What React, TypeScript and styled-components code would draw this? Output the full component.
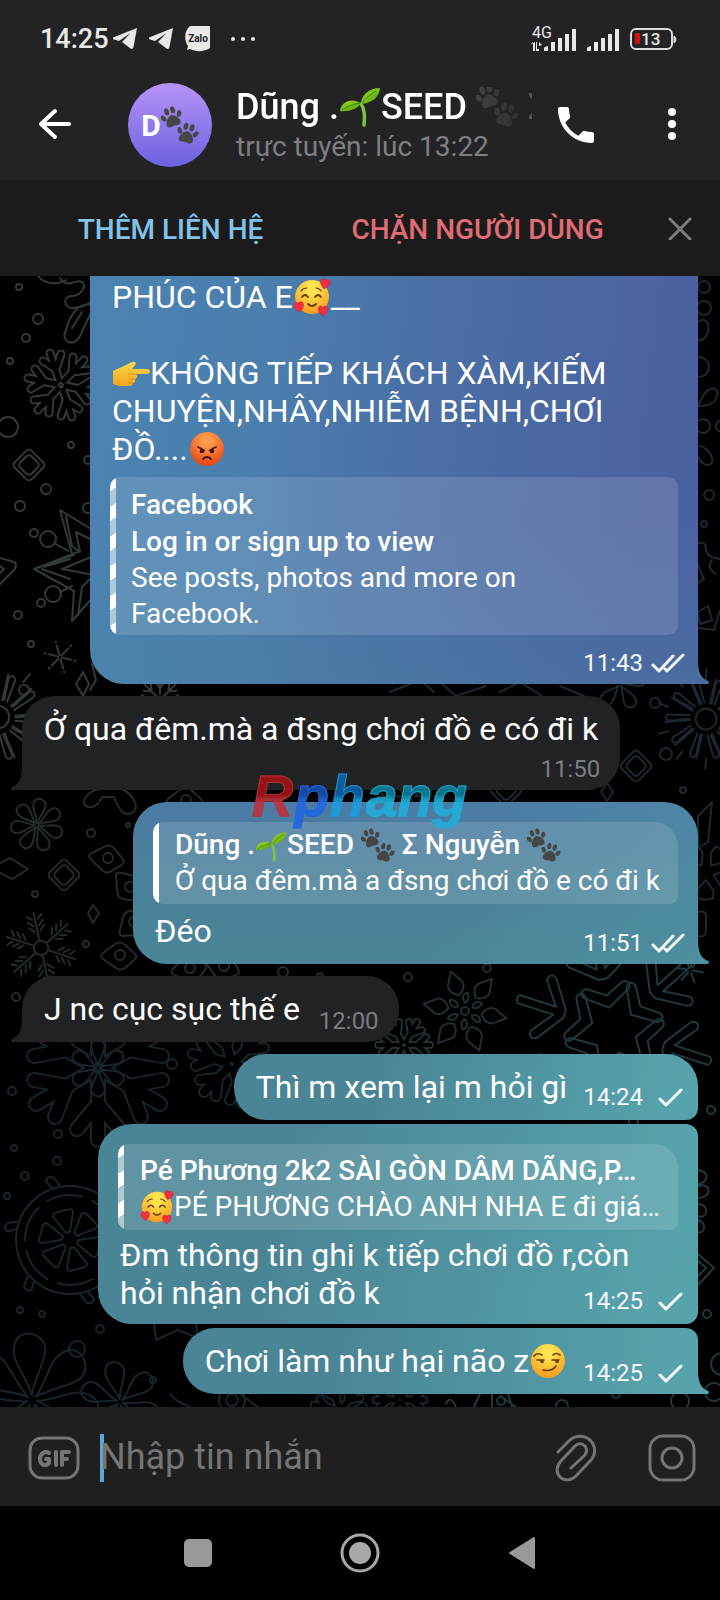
import React from "react";
import styled, { createGlobalStyle, css } from "styled-components";

const GlobalStyle = createGlobalStyle`
  *, *::before, *::after { box-sizing: border-box; }
  body { margin: 0; background: #000; }
  button, input { font: inherit; }
`;

const Screen = styled.div`
  display: flex;
  flex-direction: column;
  min-height: 100vh;
  overflow: hidden;
  background: #000;
  color: #fff;
  font-family: Roboto, "Noto Sans", "Liberation Sans", sans-serif;
`;

/* ---------- top bars ---------- */

const TopArea = styled.header`
  background: #232325;
`;

const StatusBar = styled.div`
  display: flex;
  align-items: center;
  justify-content: space-between;
  height: 70px;
  padding: 8px 42px 0 40px;
`;

const StatusGroup = styled.div`
  display: flex;
  align-items: center;
  gap: 12px;
`;

const Clock = styled.span`
  font-size: 27px;
  line-height: 32px;
  font-weight: 500;
  color: #e8e8e8;
  margin-right: -8px;
`;

const ChatHeader = styled.div`
  display: flex;
  align-items: center;
  height: 110px;
  padding: 0 24px 0 31px;
`;

const IconButton = styled.button`
  display: flex;
  flex: none;
  align-items: center;
  justify-content: center;
  width: 48px;
  height: 48px;
  padding: 0;
  border: 0;
  background: none;
  color: inherit;
`;

const Avatar = styled.div`
  display: flex;
  flex: none;
  align-items: center;
  justify-content: center;
  width: 84px;
  height: 84px;
  margin: 0 24px 0 49px;
  border-radius: 50%;
  background: linear-gradient(#b694f9, #6c61df);
  font-size: 30px;
  font-weight: 700;
`;

const Identity = styled.div`
  flex: 1;
  min-width: 0;
  margin-right: 20px;
  padding-top: 1px;
`;

const PeerName = styled.h1`
  margin: 0 0 2px;
  overflow: hidden;
  white-space: nowrap;
  font-size: 36px;
  line-height: 40px;
  font-weight: 500;
  mask-image: linear-gradient(90deg, #000 78%, rgba(0, 0, 0, 0.2) 100%);
`;

const PeerStatus = styled.p`
  margin: 0;
  font-size: 28px;
  line-height: 36px;
  color: #7f7f81;
  white-space: nowrap;
`;

const HeaderActions = styled.div`
  display: flex;
  gap: 48px;
`;

const ContactBar = styled.div`
  display: grid;
  grid-template-columns: 5fr 4fr 106px;
  align-items: center;
  height: 96px;
  background: #1b1b1b;
`;

const ContactAction = styled.button<{ $color: string }>`
  padding: 4px 0 0;
  border: 0;
  background: none;
  color: ${(p) => p.$color};
  font-size: 28px;
  line-height: 36px;
  font-weight: 500;
  white-space: nowrap;
`;

const CloseSlot = styled.div`
  display: flex;
  justify-content: center;
  padding-left: 26px;
`;

/* ---------- conversation ---------- */

const Conversation = styled.main`
  position: relative;
  display: flex;
  flex: 1;
  flex-direction: column;
  align-items: flex-start;
  overflow: hidden;
  padding: 0 22px 13px;
`;

const WallpaperSvg = styled.svg`
  position: absolute;
  inset: 0;
  width: 100%;
  height: 100%;
  fill: none;
  stroke-width: 2;
  stroke-linejoin: round;
  stroke-linecap: round;
`;

type Corners = "cut" | "tail" | "first" | "middle" | "last" | "incoming";

const cornerRadii: Record<Corners, string> = {
  cut: "0 0 0 34px",
  tail: "34px 34px 0 34px",
  first: "32px 32px 12px 32px",
  middle: "34px 12px 12px 34px",
  last: "32px 12px 0 32px",
  incoming: "32px 32px 32px 0",
};

const BubbleBox = styled.article<{ $own?: boolean; $corners: Corners; $fill: string; $gap: number; $width?: number }>`
  position: relative;
  display: flex;
  flex-direction: column;
  align-self: ${(p) => (p.$own ? "flex-end" : "flex-start")};
  max-width: 100%;
  ${(p) =>
    p.$width &&
    css`
      width: ${p.$width}px;
    `}
  margin-top: ${(p) => p.$gap}px;
  padding: 0 20px;
  border-radius: ${(p) => cornerRadii[p.$corners]};
  background: ${(p) => p.$fill};
`;

const TailSvg = styled.svg<{ $own?: boolean }>`
  position: absolute;
  bottom: 0;
  ${(p) => (p.$own ? "right: -11px;" : "left: -11px; transform: scaleX(-1);")}
`;

const Text = styled.p<{ $top?: number; $bottom?: number }>`
  margin: 0;
  padding: ${(p) => p.$top ?? 14}px 2px ${(p) => p.$bottom ?? 14}px;
  font-size: 32px;
  line-height: 38px;
`;

/* Text and time share a cell so that a long line may run above the time. */
const Stack = styled.div`
  display: grid;
  > * { grid-area: 1 / 1; }
`;

const Row = styled.div`
  display: flex;
  gap: 14px;
`;

const Meta = styled.div<{ $own?: boolean; $top?: number; $bottom?: number }>`
  display: flex;
  flex: none;
  align-items: center;
  align-self: end;
  justify-self: end;
  gap: 8px;
  margin: ${(p) => p.$top ?? 0}px ${(p) => (p.$own ? "-7px" : "0")} ${(p) => p.$bottom ?? 7}px ${(p) => (p.$own ? 0 : 3)}px;
  font-size: 24px;
  line-height: 28px;
  color: ${(p) => (p.$own ? "#f4fafc" : "#7c7d7f")};
`;

const Quote = styled.blockquote<{ $margin: string; $pad: string; $striped?: boolean; $round?: boolean }>`
  margin: ${(p) => p.$margin};
  padding: ${(p) => p.$pad};
  border-radius: ${(p) => (p.$round ? "10px 24px 8px 10px" : "10px")};
  background:
    ${(p) =>
      p.$striped
        ? "repeating-linear-gradient(147deg, #fff 0 12px, rgba(255, 255, 255, 0.5) 12px 25px)"
        : "linear-gradient(#fff, #fff)"}
      left / 6px 100% no-repeat,
    rgba(255, 255, 255, 0.13);
  font-size: 28px;
  line-height: 36px;
  white-space: nowrap;
`;

const QuoteLine = styled.div<{ $strong?: boolean; $roomy?: boolean }>`
  font-weight: ${(p) => (p.$strong ? 500 : 400)};
  line-height: ${(p) => (p.$roomy ? 37 : 36)}px;
`;

const Watermark = styled.div`
  position: absolute;
  z-index: 2;
  top: 488px;
  left: 35%;
  font-family: "Liberation Sans", sans-serif;
  font-size: 57px;
  line-height: 64px;
  font-weight: 700;
  font-style: italic;
  opacity: 0.92;
`;

const MarkPart = styled.span<{ $top: string; $bottom: string }>`
  background: linear-gradient(${(p) => p.$top} 48%, ${(p) => p.$bottom} 56%);
  background-clip: text;
  color: transparent;
  padding-right: 1px;
  -webkit-text-stroke: 1px ${(p) => p.$bottom};
`;

/* ---------- composer and system navigation ---------- */

const Composer = styled.form`
  display: flex;
  align-items: center;
  height: 99px;
  padding: 2px 22px 0 28px;
  background: #1f1f1f;
  color: #757575;
`;

const Caret = styled.span`
  flex: none;
  width: 4px;
  height: 48px;
  margin-left: 20px;
  background: #63a5d3;
`;

const MessageInput = styled.input`
  flex: 1;
  min-width: 0;
  height: 48px;
  margin-left: -4px;
  padding: 0 0 2px;
  border: 0;
  outline: 0;
  background: none;
  color: #fff;
  font-size: 36px;
  &::placeholder { color: #757575; opacity: 1; }
`;

const ToolButton = styled(IconButton)`
  width: 52px;
  & + & { margin-left: 44px; }
`;

const NavBar = styled.nav`
  display: flex;
  align-items: center;
  justify-content: center;
  gap: 114px;
  height: 94px;
  color: #999;
`;

/* ---------- emoji drawings ---------- */

const EmojiSvg = styled.svg<{ $size: number }>`
  display: inline-block;
  width: ${(p) => p.$size}px;
  height: ${(p) => p.$size}px;
  margin: -8px 0;
  vertical-align: baseline;
`;

const Heart = ({ x, y, r = 0 }: { x: number; y: number; r?: number }) => (
  <path
    transform={`translate(${x} ${y}) rotate(${r})`}
    d="M0 5C-7 0-5-5-2-5c1 0 2 1 2 2 0-1 1-2 2-2 3 0 5 5-2 10z"
    fill="#ee3142"
    stroke="#c9202e"
    strokeWidth="0.5"
  />
);

const FaceBase = ({ id, from, to }: { id: string; from: string; to: string }) => (
  <>
    <defs>
      <radialGradient id={id} cx="0.5" cy="0.25" r="0.75">
        <stop offset="0.2" stopColor={from} />
        <stop offset="1" stopColor={to} />
      </radialGradient>
    </defs>
    <circle cx="19" cy="19" r="17" fill={`url(#${id})`} />
  </>
);

const LoveFace = ({ size = 38 }: { size?: number }) => (
  <EmojiSvg $size={size} viewBox="0 0 38 38" role="img" aria-label="🥰">
    <FaceBase id="love" from="#ffe44f" to="#f79a1c" />
    <g fill="none" stroke="#6a3a12" strokeWidth="1.8" strokeLinecap="round">
      <path d="M9 19q3-4 6 0M22 19q3-4 6 0M15 26q4 4 8 0" />
      <path d="M8 13q2-3 6-3M23 10q3 0 5 3" strokeWidth="1.2" />
    </g>
    <Heart x={32} y={6} r={12} />
    <Heart x={6} y={29} r={-8} />
    <Heart x={30} y={33} />
  </EmojiSvg>
);

const AngryFace = () => (
  <EmojiSvg $size={38} viewBox="0 0 38 38" role="img" aria-label="😡">
    <FaceBase id="angry" from="#ff9a4d" to="#e5420f" />
    <circle cx="14" cy="21" r="2.3" fill="#4a1208" />
    <circle cx="24" cy="21" r="2.3" fill="#4a1208" />
    <path d="M10 17q3 1 6 3.500M28 17q-3 1-6 3.500M15 29q4-4 8 0" fill="none" stroke="#4a1208" strokeWidth="1.800" strokeLinecap="round" />
  </EmojiSvg>
);

const SmirkFace = () => (
  <EmojiSvg $size={38} viewBox="0 0 38 38" role="img" aria-label="😏">
    <FaceBase id="smirk" from="#ffe44f" to="#f79a1c" />
    <g fill="none" stroke="#6a3a12" strokeWidth="1.6" strokeLinecap="round">
      <path d="M8 18h7M23 18h7M5 14q3-4 8-1M24 13q3-3 7 0M14 28q9 2 13-4" />
    </g>
    <circle cx="13" cy="19.500" r="1.800" fill="#6a3a12" />
    <circle cx="28" cy="19.500" r="1.800" fill="#6a3a12" />
  </EmojiSvg>
);

const PointRight = () => (
  <EmojiSvg $size={38} viewBox="0 0 38 38" role="img" aria-label="👉">
    <defs>
      <linearGradient id="hand" x1="0" y1="0" x2="0" y2="1">
        <stop offset="0" stopColor="#ffd84a" />
        <stop offset="1" stopColor="#f0a51e" />
      </linearGradient>
    </defs>
    <path
      d="M1 17l11-5 8-4c3-1 5 1 3 3l-3 4h15c4 0 4 5 0 5H24c2 2 1 4-1 5 1 2 0 4-2 4 0 2-1 3-4 3H7L1 30z"
      fill="url(#hand)"
    />
    <path d="M24 20h-8M23 25h-6M21 29h-5" stroke="#d98d12" strokeWidth="1.200" fill="none" />
  </EmojiSvg>
);

const Seedling = ({ size }: { size: number }) => (
  <EmojiSvg $size={size} viewBox="0 0 42 42" role="img" aria-label="🌱">
    <defs>
      <linearGradient id="leaf" x1="0" y1="0" x2="1" y2="1">
        <stop offset="0" stopColor="#a4dd1c" />
        <stop offset="1" stopColor="#4f9d12" />
      </linearGradient>
    </defs>
    <path d="M22 19c4 5 4 12 3 21" fill="none" stroke="#7cc43a" strokeWidth="3.500" strokeLinecap="round" />
    <path d="M41 3c-1 9-7 15-19 16 0-9 8-16 19-16z" fill="url(#leaf)" />
    <path d="M1 26c1-9 11-14 21-8-3 6-12 9-21 8z" fill="url(#leaf)" />
    <path d="M23 18c4-5 9-9 14-12M3 25c6-4 12-6 18-7" fill="none" stroke="#3c8210" strokeWidth="1" />
  </EmojiSvg>
);

const Paw = ({ x, y, r }: { x: number; y: number; r: number }) => (
  <g transform={`translate(${x} ${y}) rotate(${r})`}>
    <path d="M0-3c4 0 8 6 8 9 0 4-4 4-8 3-4 1-8 1-8-3 0-3 4-9 8-9z" />
    <ellipse cx="-9" cy="-2" rx="2.500" ry="3.800" transform="rotate(-28 -9 -2)" />
    <ellipse cx="-3.500" cy="-8" rx="2.600" ry="4" />
    <ellipse cx="3.500" cy="-8" rx="2.600" ry="4" />
    <ellipse cx="9" cy="-2" rx="2.500" ry="3.800" transform="rotate(28 9 -2)" />
  </g>
);

const Paws = ({ size }: { size: number }) => (
  <EmojiSvg $size={size} viewBox="0 0 42 42" fill="#464646" role="img" aria-label="🐾">
    <Paw x={12} y={13} r={-18} />
    <Paw x={29} y={31} r={14} />
  </EmojiSvg>
);

/* ---------- icons ---------- */

const PlaneIcon = () => (
  <svg width="24" height="22" viewBox="0 0 24 22" fill="#e8e8e8" aria-hidden="true">
    <path d="M24 0L0 9.500c-1 1 0 1.700 1 2l5 1.500L17.500 5 9 14l8.500 6.500c1.500 1 2.500.5 3-1.500z" />
  </svg>
);

const ZaloIcon = () => (
  <svg width="26" height="26" viewBox="0 0 26 26" aria-hidden="true">
    <path d="M5 0h20v22c-6 4-14 4-20 1l-3 1 1-4C-1 14-1 5 5 0z" fill="#e8e8e8" />
    <text x="13" y="16" textAnchor="middle" fontSize="10" fontWeight="700" fill="#232325">Zalo</text>
  </svg>
);

const SignalBars = ({ x }: { x: number }) => (
  <path
    transform={`translate(${x} 0)`}
    d="M1 26v-3q0-1 4-2v5zM8 26v-9h4v9zM15 26V13h4v13zM22 26V9h4v17zM29 26V4h4v22z"
    fill="#e8e8e8"
  />
);

const SystemStatus = () => (
  <svg width="150" height="40" viewBox="-2 -6 150 40" role="img" aria-label="4G, 13%">
    <text x="2" y="13" fontSize="16" fill="#e8e8e8">4G</text>
    <path d="M0 20l3-3v9h2V17zM6 26v-9h1v7h2v-7l3 3-3 1v5z" fill="#e8e8e8" />
    <SignalBars x={13} />
    <SignalBars x={56} />
    <rect x="101" y="4" width="41" height="20" rx="5" fill="none" stroke="#dcdcdc" strokeWidth="2" />
    <path d="M144 11q2 1 2 3.500T144 18z" fill="#dcdcdc" stroke="#dcdcdc" />
    <rect x="105" y="8" width="5" height="11" rx="1" fill="#d01212" />
    <text x="111" y="20" fontSize="17" fontWeight="500" fill="#e8e8e8">13</text>
  </svg>
);

const Tail = ({ own, color }: { own?: boolean; color: string }) => (
  <TailSvg $own={own} width="11" height="24" viewBox="0 0 11 24" fill={color} aria-hidden="true">
    <path d="M0 0c0 12 3 18 10 21q2 1 0 3H0z" />
  </TailSvg>
);

const Ticks = ({ double }: { double?: boolean }) => (
  <svg width="34" height="20" viewBox="0 0 34 20" fill="none" stroke="#f4fafc" strokeWidth="3" strokeLinecap="round" strokeLinejoin="round" aria-hidden="true">
    {double ? <path d="M2 12l6 6L22 3M14 16l2 2L32 2" /> : <path d="M9 12l6 6L30 3" />}
  </svg>
);

/* ---------- wallpaper ---------- */

const turns = (n: number) => Array.from({ length: n }, (_, i) => (360 / n) * i);

const At = ({ x, y, s = 1, n = 6, turn = 0, children }: { x: number; y: number; s?: number; n?: number; turn?: number; children: React.ReactNode }) => (
  <g transform={`translate(${x} ${y}) rotate(${turn}) scale(${s})`} strokeWidth={2 / s}>
    {turns(n).map((a) => (
      <g key={a} transform={`rotate(${a})`}>
        {children}
      </g>
    ))}
  </g>
);

/* Branches drawn wide, then cored out in black, leaving an outline. */
const Outlined = ({ x, y, r, turn = 0, w = 9 }: { x: number; y: number; r: number; turn?: number; w?: number }) => {
  const d = turns(6)
    .map((a) => {
      const t = ((a + turn) * Math.PI) / 180;
      const p = (k: number, o: number) => `${Math.round(x + Math.cos(t + o) * r * k)} ${Math.round(y + Math.sin(t + o) * r * k)}`;
      return `M${p(0.15, 0)}L${p(1, 0)}M${p(0.5, 0)}L${p(0.9, 0.33)}M${p(0.5, 0)}L${p(0.9, -0.33)}`;
    })
    .join("");
  return (
    <>
      <path d={d} strokeWidth={w} />
      <path d={d} strokeWidth={w - 4} stroke="#000" />
    </>
  );
};

const Petals = ({ x, y, r, n = 6, turn = 0 }: { x: number; y: number; r: number; n?: number; turn?: number }) => (
  <At x={x} y={y} n={n} turn={turn} s={r / 40}>
    <path d="M3 0C16-3 24-12 34-9s7 15 0 18S16 3 3 0z" />
  </At>
);

const Leaves = ({ x, y, r, turn = 0 }: { x: number; y: number; r: number; turn?: number }) => (
  <>
    <At x={x} y={y} turn={turn} s={r / 40}>
      <path d="M16 0q5-9 12-7l12 7-12 7q-7 2-12-7zM7 3q8-3 9 5-7 1-9-5z" />
    </At>
    <circle cx={x} cy={y} r="4" />
  </>
);

const Burst = ({ x, y, r }: { x: number; y: number; r: number }) => (
  <>
    <circle cx={x} cy={y} r={r / 5} />
    <At x={x} y={y} n={10} turn={9} s={r / 50}>
      <path d="M16-2l18-5c6-1 6 6 0 6L16 1M38 6l9 2M14 6l22 9" />
    </At>
  </>
);

const Spiky = ({ x, y, r, turn = 0 }: { x: number; y: number; r: number; turn?: number }) => (
  <>
    <circle cx={x} cy={y} r={r / 5} />
    <At x={x} y={y} turn={turn} s={r / 38}>
      <path d="M9 0h29M18 3l5 5M18-3l5-5M24 3l5 5M24-3l5-5M31 3l4 5M31-3l4-5" />
    </At>
  </>
);

/* Nested chevrons pointing outwards along each arm. */
const Chevrons = ({ x, y, r, turn = 0 }: { x: number; y: number; r: number; turn?: number }) => (
  <At x={x} y={y} turn={turn} s={r / 100}>
    <path d="M22 0l14-22q4-3 7 0 2 3 0 6L34 0l9 16q2 3 0 6-3 3-7 0zM50-4l18-26q4-3 7 0 2 3 0 6L60-4h36q4 4 0 8H60l15 20q2 3 0 6-3 3-7 0L50 4z" />
  </At>
);

const Star = ({ x, y, r, turn = 0 }: { x: number; y: number; r: number; turn?: number }) => (
  <At x={x} y={y} turn={turn} s={r / 60}>
    <path d="M20-12L60 0 20 12M18-6L44 0 18 6M20 12l4 8-8 2M10-4l12 4-12 4" />
  </At>
);

const Diamond = ({ x, y, r = 12 }: { x: number; y: number; r?: number }) => (
  <g transform={`translate(${x} ${y}) rotate(45)`}>
    <rect x={-r} y={-r} width={2 * r} height={2 * r} rx="4" />
    <rect x={4 - r} y={4 - r} width={2 * r - 8} height={2 * r - 8} rx="4" />
  </g>
);

const Gem = ({ x, y, turn }: { x: number; y: number; turn: number }) => (
  <g transform={`translate(${x} ${y}) rotate(${turn})`}>
    <path d="M-17 4q-4-3 0-6l12-9q5-3 9 0l10 9q4 3 1 6L5 13q-5 3-9 0z" />
    <circle r="5" />
  </g>
);

const Dots = ({ at }: { at: number[][] }) => (
  <>
    {at.map(([x, y, r]) => (
      <circle key={`${x}-${y}`} cx={x} cy={y} r={r} />
    ))}
  </>
);

const Wallpaper = () => (
  <WallpaperSvg viewBox="0 276 720 1131" preserveAspectRatio="xMidYMin slice" aria-hidden="true">
    <g stroke="#303a39">
      <Dots at={[[19, 287, 3], [38, 319, 5], [26, 338, 4], [10, 361, 3], [8, 427, 10], [71, 445, 3], [46, 489, 5], [20, 506, 5], [18, 615, 4], [31, 644, 3], [24, 690, 5], [88, 460, 4], [88, 508, 5], [48, 539, 8], [34, 533, 4], [53, 594, 8], [41, 603, 4]]} />
      <path d="M38 276c8 10 22 8 28 4M60 278c8 12 16 0 22 4s-2 14-10 14c-10 0-8 12 0 12 12 0 20-6 24-12M66 330c-6 12 8 18 14 6l14-30c-14-6-24 8-28 24zM72 328l10-16" />
      <Outlined x={61} y={385} r={34} turn={12} />
      <Diamond x={29} y={465} />
      {/* Hexagonal star, partly behind the first bubble */}
      <path d="M60 510l36 22M60 510l12 44 6-2M78 552l-44 17 40 22M34 569l40-14M74 591l-2 30 28-32M66 516l6 30 8 6-4-20 20 10M42 569l28 10M44 567l26-8M78 615l4-28 12-12-32-6 34-14M54 543l14 8M60 592l12-6" />
      <path d="M0 558l14 4q4 2 0 8L0 584M0 566l4 3-4 4" />
      <At x={60} y={657} turn={14}><path d="M2 0h10M15 0h1" /></At>
      <Burst x={-2} y={717} r={56} />
      <path d="M83 672l-7 12 7 12 6-12zM92 664l4 16-6 10" />
      <At x={160} y={700} n={8}><path d="M6 0h20M12 0l6-5M12 0l6 5" /></At>
    </g>
    <g stroke="#1d2730">
      <Dots at={[[704, 287, 6], [704, 308, 7], [703, 426, 7], [722, 426, 6], [699, 367, 10], [709, 495, 5], [704, 524, 3], [655, 703, 5], [666, 754, 6], [683, 790, 3]]} />
      <path d="M698 322c14-10 14 20 0 18M698 406c10-26 24-18 18-8-2 6-8 8-18 8zM698 446c8 0 16 10 14 16s-12 2-14-6M698 543q8-2 8 6t14 10M698 565l6 14-6 4M712 560q-6 8 4 14M698 628l16 2 6-20M698 612l10-6 4 14-12 4z" />
      <Burst x={706} y={719} r={52} />
      <Diamond x={636} y={766} r={12} />
      <Petals x={620} y={684} r={26} n={5} turn={60} />
      <path d="M607 783l-6 9 6 9 6-9zM698 816l14-14-4 40-10 6z" />
      <path d="M390 692l30-12 14 12M440 682l16 14 30-10M500 692l20-10 22 14M560 686l24 10" />
      <Diamond x={506} y={790} />
      <Outlined x={410} y={800} r={30} />
      <At x={706} y={872} n={5} turn={20}><path d="M8 0l10-8h8l2 8-2 8h-8z" /></At>
      <path d="M698 912q8-2 8 4v16q-2 6-8 4" />
    </g>
    <g stroke="#222b2d">
      <Petals x={37} y={825} r={26} turn={20} n={7} />
      <Dots at={[[91, 833, 4], [128, 825, 2], [35, 894, 3], [86, 944, 3], [16, 997, 4], [283, 972, 5], [320, 976, 3]]} />
      <path d="M104 789c-14 0-20 8-20 14 4 8 14 4 18-6h12c4 10 8 20 18 16 8-6 2-18-10-24M93 905l-5 8 5 10 6-10zM0 863l10-5 18 11-16 10L0 873" />
      <Diamond x={64} y={875} />
      <Gem x={108} y={858} turn={10} />
      <Gem x={130} y={887} turn={50} />
      <Gem x={134} y={922} turn={-40} />
      <Gem x={120} y={955} turn={0} />
      <Gem x={186} y={800} turn={0} />
      <Gem x={190} y={968} turn={-10} />
      <Gem x={224} y={966} turn={20} />
      <Spiky x={41} y={948} r={36} turn={18} />
    </g>
    <g stroke="#202e33">
      <Leaves x={465} y={1011} r={42} turn={10} />
      <Outlined x={404} y={1045} r={26} w={8} />
      <Dots at={[[408, 977, 4], [487, 968, 4]]} />
    </g>
    <g stroke="#1f383d">
      <Chevrons x={614} y={1030} r={104} turn={-42} />
      <At x={690} y={970} turn={10}><path d="M3 0h10" /></At>
      <Dots at={[[711, 1110, 4], [707, 1314, 4], [722, 1364, 11], [616, 1394, 4], [562, 1406, 6], [680, 1401, 9], [714, 1392, 9]]} />
      <path d="M698 1170c14 2 8 14 0 14M698 1186c14-4 14 12 0 12M698 1204c12 0 10 16 0 12M698 1220c10 4 6 14 0 12M698 1254l16 14-16 17M698 1261l8 7-8 8" />
      <path d="M500 1396l16 11M446 1404q4-10 10 3M480 1394l-6 13M492 1394v13M508 1394l4 13" />
      <circle cx="501" cy="1401" r="4" />
    </g>
    <g stroke="#18242b">
      <Outlined x={98} y={1068} r={72} turn={30} w={16} />
      <Petals x={98} y={1068} r={28} turn={30} />
      <Outlined x={232} y={1064} r={40} turn={15} w={12} />
      <Dots at={[[172, 1064, 5], [12, 1091, 4], [58, 1134, 4], [14, 1148, 3], [57, 1161, 4], [25, 1176, 4], [7, 1196, 3], [20, 1310, 3], [42, 1314, 3], [100, 1329, 4], [153, 1380, 3], [77, 1349, 8], [232, 1400, 13], [232, 1400, 6]]} />
      <circle cx="70" cy="1240" r="54" />
      <circle cx="70" cy="1240" r="45" strokeDasharray="36 11" />
      <At x={70} y={1240} turn={15}><path d="M8-2l18-8q4-1 4 4v12q0 5-4 4L8 2zM55-4l8-4q5 2 2 8l-9 4" /></At>
      <Petals x={32} y={1400} r={66} n={7} turn={10} />
      <Petals x={120} y={1402} r={40} n={6} turn={20} />
      <path d="M154 1324l2 16 22-10 20 8-2-14M170 1394c6 8 14 10 20 13M240 1394l18 13" />
      <Outlined x={340} y={1410} r={26} turn={10} />
      <Outlined x={400} y={1400} r={24} />
    </g>
  </WallpaperSvg>
);

const blueFill =
  "linear-gradient(rgba(74,133,150,0) 60%, rgba(74,133,160,.3)), linear-gradient(97deg, #4b83b1 0%, #4a7fae 26%, #4b6fa6 54%, #4b62a0 88%)";
const midFill =
  "linear-gradient(110deg, rgba(84,160,174,0) 55%, rgba(84,160,174,.35)), linear-gradient(#4b7ba5 0%, #4b8199 50%, #4a8597 100%)";
const tealFill = "linear-gradient(100deg, #4a8596 30%, #57a3ac 95%)";
const darkFill = "#212224";

export default function App() {
  return (
    <Screen>
      <GlobalStyle />
      <TopArea>
        <StatusBar>
          <StatusGroup>
            <Clock>14:25</Clock>
            <PlaneIcon />
            <PlaneIcon />
            <ZaloIcon />
            <svg width="42" height="8" viewBox="0 0 42 8" fill="#e8e8e8" aria-hidden="true">
              <circle cx="10" cy="4" r="2" />
              <circle cx="20" cy="4" r="2" />
              <circle cx="30" cy="4" r="2" />
            </svg>
          </StatusGroup>
          <SystemStatus />
        </StatusBar>
        <ChatHeader>
          <IconButton type="button" aria-label="Quay lại">
            <svg width="48" height="48" viewBox="0 0 48 48" fill="none" stroke="#fff" strokeWidth="4" strokeLinecap="round" strokeLinejoin="round">
              <path d="M38 23H10M24 10L10 23l14 13" />
            </svg>
          </IconButton>
          <Avatar>
            D<Paws size={38} />
          </Avatar>
          <Identity>
            <PeerName>
              Dũng .<Seedling size={42} />SEED <Paws size={43} /> Σ Nguyễn
            </PeerName>
            <PeerStatus>trực tuyến: lúc 13:22</PeerStatus>
          </Identity>
          <HeaderActions>
            <IconButton type="button" aria-label="Gọi">
              <svg width="48" height="48" viewBox="0 0 24 24" fill="#fff">
                <path d="M6.620 10.790c1.440 2.830 3.760 5.140 6.590 6.590l2.200-2.200c.27-.27.67-.36 1.020-.24 1.120.37 2.330.57 3.570.57.55 0 1 .45 1 1V20c0 .55-.45 1-1 1-9.390 0-17-7.610-17-17 0-.55.45-1 1-1h3.500c.55 0 1 .45 1 1 0 1.250.2 2.450.57 3.570.11.35.03.74-.25 1.020l-2.200 2.200z" />
              </svg>
            </IconButton>
            <IconButton type="button" aria-label="Tùy chọn">
              <svg width="48" height="48" viewBox="0 0 48 48" fill="#fff">
                <circle cx="24" cy="11" r="4" />
                <circle cx="24" cy="23" r="4" />
                <circle cx="24" cy="35" r="4" />
              </svg>
            </IconButton>
          </HeaderActions>
        </ChatHeader>
      </TopArea>
      <ContactBar>
        <ContactAction type="button" $color="#82c3ea">THÊM LIÊN HỆ</ContactAction>
        <ContactAction type="button" $color="#e06c75">CHẶN NGƯỜI DÙNG</ContactAction>
        <CloseSlot>
          <IconButton type="button" aria-label="Đóng">
            <svg width="24" height="24" viewBox="0 0 24 24" stroke="#7c7c7c" strokeWidth="3" strokeLinecap="round">
              <path d="M2 3l20 20M22 3L2 23" />
            </svg>
          </IconButton>
        </CloseSlot>
      </ContactBar>

      <Conversation>
        <Wallpaper />
        <BubbleBox $own $corners="cut" $fill={blueFill} $gap={0} $width={608}>
          <Text $top={2} $bottom={0}>
            PHÚC CỦA E<LoveFace />__
            <br />
            <br />
            <PointRight />KHÔNG TIẾP KHÁCH XÀM,KIẾM CHUYỆN,NHÂY,NHIỄM BỆNH,CHƠI ĐỒ....<AngryFace />
          </Text>
          <Quote $margin="9px 0 0" $pad="9px 16px 3px 21px" $striped>
            <QuoteLine $strong $roomy>Facebook</QuoteLine>
            <QuoteLine $strong $roomy>Log in or sign up to view</QuoteLine>
            <QuoteLine>
              See posts, photos and more on
              <br />
              Facebook.
            </QuoteLine>
          </Quote>
          <Meta $own $top={14}>
            <time>11:43</time>
            <Ticks double />
          </Meta>
          <Tail own color="#4b6ca4" />
        </BubbleBox>

        <BubbleBox $corners="incoming" $fill={darkFill} $gap={12}>
          <Text $bottom={0}>Ở qua đêm.mà a đsng chơi đồ e có đi k</Text>
          <Meta $top={7}>
            <time>11:50</time>
          </Meta>
          <Tail color={darkFill} />
        </BubbleBox>

        <BubbleBox $own $corners="tail" $fill={midFill} $gap={12}>
          <Quote $margin="20px 0 8px" $pad="5px 18px 5px 22px" $round>
            <QuoteLine $strong>
              Dũng .<Seedling size={32} />SEED <Paws size={34} /> Σ Nguyễn <Paws size={34} />
            </QuoteLine>
            <QuoteLine>Ở qua đêm.mà a đsng chơi đồ e có đi k</QuoteLine>
          </Quote>
          <Stack>
            <Text $top={0}>Đéo</Text>
            <Meta $own>
              <time>11:51</time>
              <Ticks double />
            </Meta>
          </Stack>
          <Tail own color="#4f92a3" />
        </BubbleBox>

        <BubbleBox $corners="incoming" $fill={darkFill} $gap={12}>
          <Row>
            <Text>J nc cục sục thế e</Text>
            <Meta>
              <time>12:00</time>
            </Meta>
          </Row>
          <Tail color={darkFill} />
        </BubbleBox>

        <BubbleBox $own $corners="first" $fill={tealFill} $gap={12}>
          <Row>
            <Text>Thì m xem lại m hỏi gì</Text>
            <Meta $own $bottom={9}>
              <time>14:24</time>
              <Ticks />
            </Meta>
          </Row>
        </BubbleBox>

        <BubbleBox $own $corners="middle" $fill={tealFill} $gap={4} $width={600}>
          <Quote $margin="20px 0 6px" $pad="9px 16px 5px 22px" $striped $round>
            <QuoteLine $strong>Pé Phương 2k2 SÀI GÒN DÂM DÃNG,P…</QuoteLine>
            <QuoteLine>
              <LoveFace size={34} />PÉ PHƯƠNG CHÀO ANH NHA E đi giá…
            </QuoteLine>
          </Quote>
          <Stack>
            <Text $top={0} $bottom={12}>
              Đm thông tin ghi k tiếp chơi đồ r,còn
              <br />
              hỏi nhận chơi đồ k
            </Text>
            <Meta $own $bottom={9}>
              <time>14:25</time>
              <Ticks />
            </Meta>
          </Stack>
        </BubbleBox>

        <BubbleBox $own $corners="last" $fill={tealFill} $gap={4}>
          <Row>
            <Text>
              Chơi làm như hại não z<SmirkFace />
            </Text>
            <Meta $own>
              <time>14:25</time>
              <Ticks />
            </Meta>
          </Row>
          <Tail own color="#57a3ac" />
        </BubbleBox>

        <Watermark>
          <MarkPart $top="#a31218" $bottom="#b8343c">R</MarkPart>
          <MarkPart $top="#1450b4" $bottom="#2268e0">p</MarkPart>
          <MarkPart $top="#0c62a6" $bottom="#1c9cdc">h</MarkPart>
          <MarkPart $top="#067f99" $bottom="#22acd6">ang</MarkPart>
        </Watermark>
      </Conversation>

      <Composer>
        <ToolButton type="button" aria-label="GIF">
          <svg width="52" height="44" viewBox="0 0 52 44" fill="none" stroke="#757575" strokeWidth="4" strokeLinecap="round" strokeLinejoin="round">
            <rect x="2" y="2" width="48" height="40" rx="12" strokeWidth="3" />
            <path d="M21 17q-3-2-6 0-3 2-3 6 0 5 4 6 4 0 5-2v-4h-3M28 16v13M34 29V16h7M34 23h5" />
          </svg>
        </ToolButton>
        <Caret />
        <MessageInput type="text" aria-label="Tin nhắn" placeholder="Nhập tin nhắn" />
        <ToolButton type="button" aria-label="Đính kèm">
          <svg width="44" height="48" viewBox="0 0 44 48" fill="none" stroke="#757575" strokeWidth="3" strokeLinecap="round" strokeLinejoin="round">
            <path d="M4 18L16 6c6-5 14-5 20 0 6 6 6 14 1 20L22 42c-5 5-12 5-16 1-4-4-4-11 1-16L21 12c3-3 7-3 10 0 2 3 2 6 0 9L17 34" />
          </svg>
        </ToolButton>
        <ToolButton type="button" aria-label="Quay video">
          <svg width="48" height="48" viewBox="0 0 48 48" fill="none" stroke="#757575" strokeWidth="3">
            <rect x="2" y="2" width="44" height="44" rx="13" />
            <circle cx="24" cy="24" r="10" />
          </svg>
        </ToolButton>
      </Composer>

      <NavBar aria-label="Hệ thống">
        <IconButton type="button" aria-label="Ứng dụng gần đây">
          <svg width="28" height="28" viewBox="0 0 28 28" fill="#999">
            <rect width="28" height="28" rx="5" />
          </svg>
        </IconButton>
        <IconButton type="button" aria-label="Màn hình chính">
          <svg width="40" height="40" viewBox="0 0 40 40">
            <circle cx="20" cy="20" r="18" fill="none" stroke="#a8a8a8" strokeWidth="3" />
            <circle cx="20" cy="20" r="11" fill="#a8a8a8" />
          </svg>
        </IconButton>
        <IconButton type="button" aria-label="Trở về">
          <svg width="28" height="34" viewBox="0 0 28 34" fill="#999" stroke="#999" strokeWidth="2" strokeLinejoin="round">
            <path d="M26 2v30L2 17z" />
          </svg>
        </IconButton>
      </NavBar>
    </Screen>
  );
}
